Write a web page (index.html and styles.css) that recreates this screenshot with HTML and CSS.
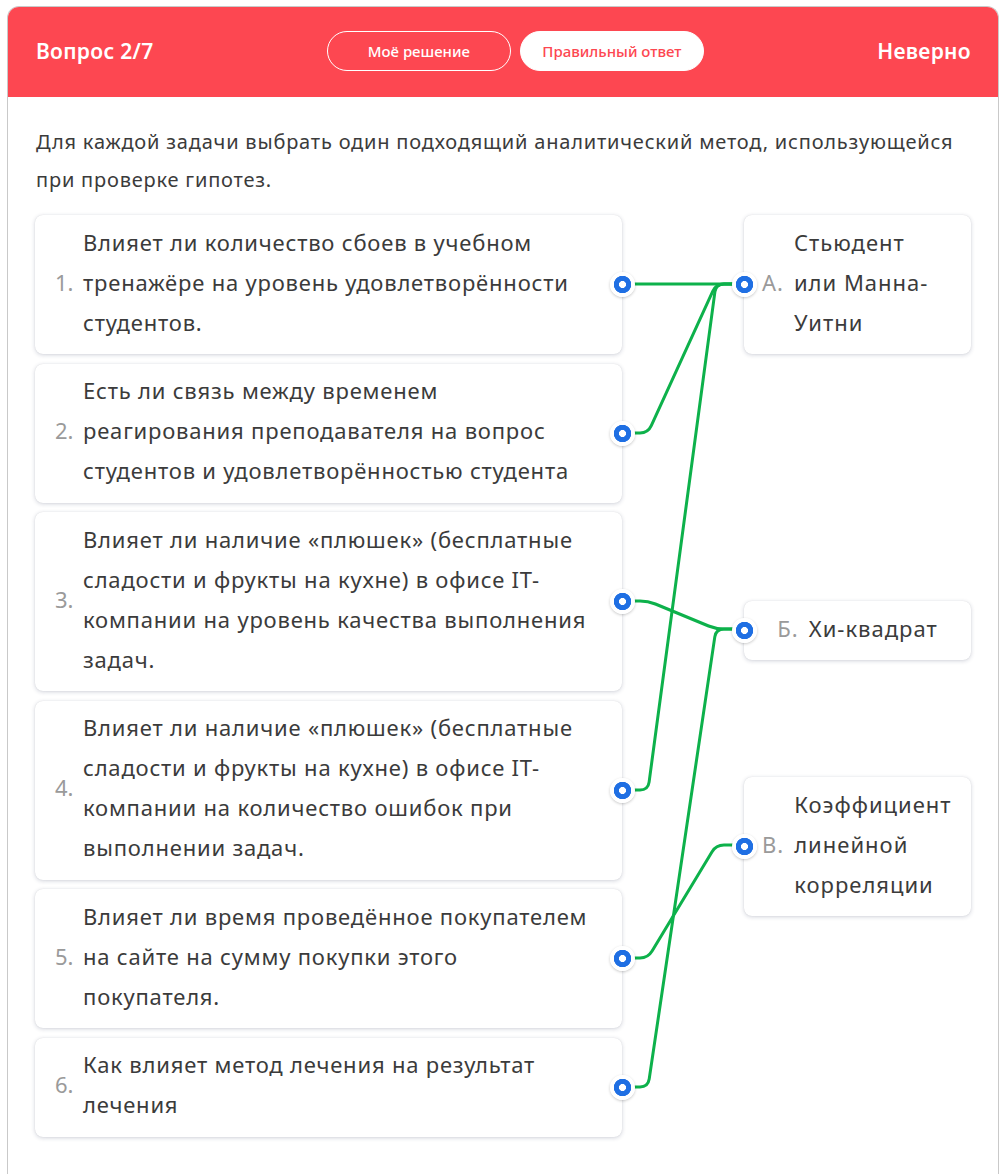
FILE: index.html
```html
<!DOCTYPE html>
<html lang="ru">
<head>
<meta charset="utf-8">
<title>Вопрос 2/7</title>
<link rel="stylesheet" href="styles.css">
</head>
<body>
<div class="quiz">
  <header class="quiz-head">
    <div class="title">Вопрос 2/7</div>
    <div class="tabs">
      <button class="tab tab-outline">Моё решение</button>
      <button class="tab tab-solid">Правильный ответ</button>
    </div>
    <div class="verdict">Неверно</div>
  </header>
  <main class="quiz-body">
    <p class="task">Для каждой задачи выбрать один подходящий аналитический метод, использующейся при проверке гипотез.</p>
    <div class="match">
      <div class="col-left">
        <div class="card left"><span class="num">1.</span><span class="txt">Влияет ли количество сбоев в учебном тренажёре на уровень удовлетворённости студентов.</span></div>
        <div class="card left"><span class="num">2.</span><span class="txt">Есть ли связь между временем реагирования преподавателя на вопрос студентов и удовлетворённостью студента</span></div>
        <div class="card left"><span class="num">3.</span><span class="txt">Влияет ли наличие «плюшек» (бесплатные сладости и фрукты на кухне) в офисе IT-компании на уровень качества выполнения задач.</span></div>
        <div class="card left"><span class="num">4.</span><span class="txt">Влияет ли наличие «плюшек» (бесплатные сладости и фрукты на кухне) в офисе IT-компании на количество ошибок при выполнении задач.</span></div>
        <div class="card left"><span class="num">5.</span><span class="txt">Влияет ли время проведённое покупателем на сайте на сумму покупки этого покупателя.</span></div>
        <div class="card left"><span class="num">6.</span><span class="txt">Как влияет метод лечения на результат лечения</span></div>
      </div>
      <svg class="links" width="122" height="930" viewBox="622 215 122 930" aria-hidden="true">
        <g fill="none" stroke="#ffffff" stroke-width="6" stroke-linecap="round" stroke-linejoin="round">
          <path d="M622 284 H743"/>
          <path d="M622 433 H640 Q648 433 651.3 425.7 L712.7 291.3 Q716 284 724 284 H743"/>
          <path d="M622 601 H640 Q648 601 655.4 604 L708.6 626 Q716 629 724 629 H743"/>
          <path d="M622 790 H640 Q648 790 649.1 782.1 L714.9 291.9 Q716 284 724 284 H743"/>
          <path d="M622 958 H640 Q648 958 652.1 951.1 L711.9 851.9 Q716 845 724 845 H743"/>
          <path d="M622 1087 H640 Q648 1087 649.2 1079.1 L714.8 636.9 Q716 629 724 629 H743"/>
        </g>
        <g fill="none" stroke="#0db14b" stroke-width="3" stroke-linecap="round" stroke-linejoin="round">
          <path d="M622 284 H743"/>
          <path d="M622 433 H640 Q648 433 651.3 425.7 L712.7 291.3 Q716 284 724 284 H743"/>
          <path d="M622 601 H640 Q648 601 655.4 604 L708.6 626 Q716 629 724 629 H743"/>
          <path d="M622 790 H640 Q648 790 649.1 782.1 L714.9 291.9 Q716 284 724 284 H743"/>
          <path d="M622 958 H640 Q648 958 652.1 951.1 L711.9 851.9 Q716 845 724 845 H743"/>
          <path d="M622 1087 H640 Q648 1087 649.2 1079.1 L714.8 636.9 Q716 629 724 629 H743"/>
        </g>
      </svg>
      <div class="col-right">
        <div class="card right ans-a"><span class="num">А.</span><span class="txt">Стьюдент или Манна-Уитни</span></div>
        <div class="card right ans-b"><span class="num">Б.</span><span class="txt">Хи-квадрат</span></div>
        <div class="card right ans-c"><span class="num">В.</span><span class="txt">Коэффициент линейной корреляции</span></div>
      </div>
    </div>
  </main>
</div>
</body>
</html>
```
FILE: styles.css
```css
* { box-sizing: border-box; }

html, body {
  margin: 0;
  padding: 0;
  background: #ffffff;
}

body {
  font-family: "Noto Sans", "Open Sans", Arial, sans-serif;
  color: #3b3b3b;
}

.quiz {
  margin: 6px 9px 0 7px;
  border: 1px solid #c9c9c9;
  border-bottom: none;
  border-radius: 12px 12px 0 0;
  min-height: 1168px;
  overflow: hidden;
}

.quiz-head {
  height: 90px;
  background: #fd4751;
  display: flex;
  align-items: center;
  justify-content: space-between;
  padding: 0 27px 2px 28px;
  color: #ffffff;
}

.title, .verdict {
  font-size: 21px;
  font-weight: 600;
  letter-spacing: 0.3px;
}

.tabs {
  display: flex;
  gap: 9px;
}

.tab {
  width: 184px;
  height: 40px;
  border-radius: 20px;
  font-family: inherit;
  font-size: 15px;
  font-weight: 500;
  cursor: pointer;
  padding: 0;
}

.tab-outline {
  background: transparent;
  border: 1px solid #ffffff;
  color: #ffffff;
}

.tab-solid {
  background: #ffffff;
  border: 1px solid #ffffff;
  color: #fd4751;
}

.quiz-body {
  padding: 26px 26px 40px 27px;
}

.task {
  margin: 0 0 16px 1px;
  font-size: 20px;
  letter-spacing: 0.8px;
  line-height: 38px;
  color: #3b3b3b;
}

.match {
  position: relative;
  display: flex;
  align-items: flex-start;
}

.col-left {
  width: 587px;
  display: flex;
  flex-direction: column;
  gap: 9.5px;
}

.links {
  display: block;
  flex: none;
  width: 122px;
  height: 930px;
  overflow: visible;
}

.col-right {
  width: 227px;
  display: flex;
  flex-direction: column;
}

.card {
  position: relative;
  background: #ffffff;
  border-radius: 8px;
  box-shadow: 0 1px 4px rgba(30, 40, 80, 0.20), 0 0 1px rgba(0, 0, 0, 0.12);
  display: flex;
  align-items: center;
  font-size: 22px;
  letter-spacing: 0.8px;
  line-height: 40px;
  padding: 6.5px 34px 12.5px 20px;
}

.card .num {
  color: #9a9a9a;
  flex: none;
  letter-spacing: 0;
}

.card.left .num {
  width: 28px;
}

.card .txt {
  color: #3b3b3b;
}

.card::after {
  content: "";
  position: absolute;
  top: 50%;
  width: 25px;
  height: 25px;
  margin-top: -12.5px;
  border-radius: 50%;
  background: radial-gradient(circle, #ffffff 0 3.2px, #1f6fe3 3.8px 8.4px, #ffffff 9px);
  box-shadow: 0 1px 3px rgba(0, 0, 0, 0.22);
  z-index: 2;
}

.card.left::after {
  right: -12.5px;
}

.card.right {
  justify-content: center;
  padding: 6.5px 18px 12.5px;
  letter-spacing: 1px;
}

.card.right::after {
  left: -12.5px;
}

.card.right .num {
  margin-right: 10px;
  letter-spacing: 1px;
}

.ans-b {
  margin-top: 247px;
}

.ans-c {
  margin-top: 117px;
}
```
